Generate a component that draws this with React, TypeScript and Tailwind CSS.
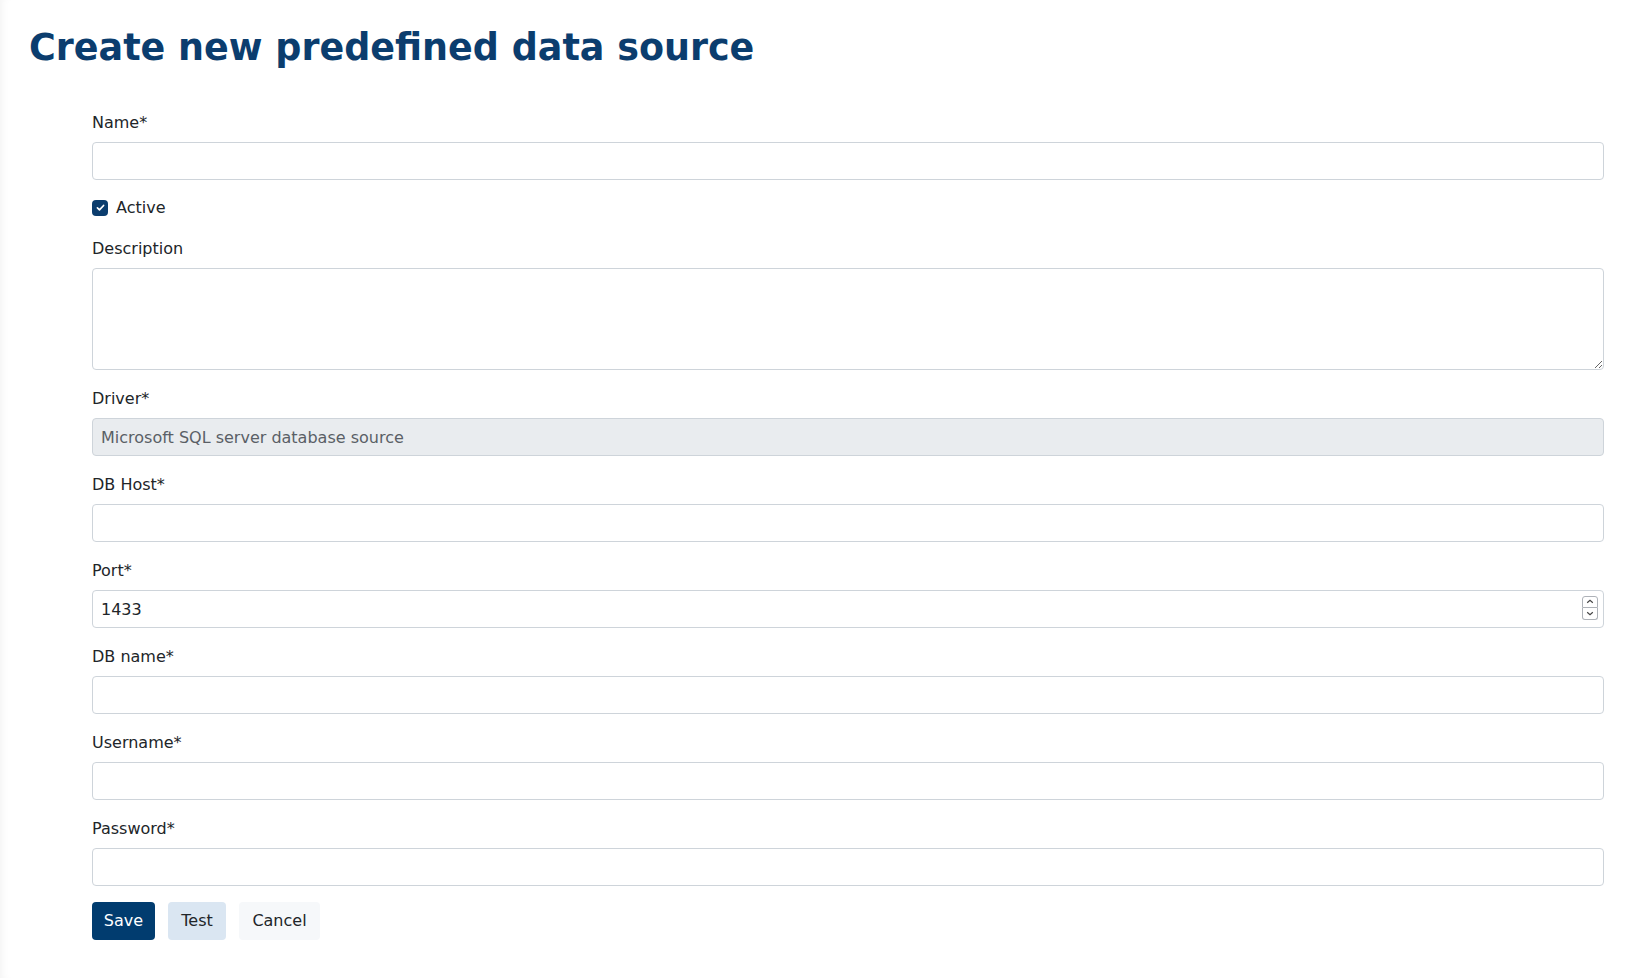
import { useState } from 'react';

const font = { fontFamily: '"DejaVu Sans", "Liberation Sans", sans-serif' };

const inputCls =
  'block w-full h-[38px] px-2 rounded-[4px] border border-[#ced4da] bg-white text-[16px] text-[#212529] outline-none';

function Label({ children }: { children: React.ReactNode }) {
  return <label className="block mb-2 pt-px h-6 leading-6 text-[16px] text-[#212529]">{children}</label>;
}

function TextField({ label, value }: { label: string; value?: string }) {
  return (
    <div className="mb-4">
      <Label>{label}</Label>
      <input type="text" defaultValue={value} className={inputCls} />
    </div>
  );
}

export default function App() {
  const [active, setActive] = useState(true);

  return (
    <div
      style={font}
      className="min-h-screen bg-white shadow-[inset_8px_0_8px_-6px_rgba(0,0,0,0.05)]"
    >
      {/* Header */}
      <h1 className="pl-[29px] pt-[26px] text-[36.5px] leading-[1.2] font-bold text-[#0b3d6e]">
        Create new predefined data source
      </h1>

      {/* Form */}
      <form className="ml-[92px] mr-[43px] mt-[40px]" onSubmit={(e) => e.preventDefault()}>
        <TextField label="Name*" />

        <div className="mb-4 flex items-center h-6">
          <button
            type="button"
            onClick={() => setActive(!active)}
            className={`w-4 h-4 rounded-[4px] flex items-center justify-center ${
              active ? 'bg-[#0b3d6e]' : 'bg-white border border-[#ced4da]'
            }`}
          >
            {active && (
              <svg viewBox="0 0 16 16" className="w-[11px] h-[11px]">
                <path
                  d="M3.5 8.5l3 3 6-6.5"
                  fill="none"
                  stroke="#fff"
                  strokeWidth="2.4"
                  strokeLinecap="round"
                  strokeLinejoin="round"
                />
              </svg>
            )}
          </button>
          <span className="ml-2 pt-px text-[16px] leading-6 text-[#212529]">Active</span>
        </div>

        <div className="mb-4">
          <Label>Description</Label>
          <textarea className="block w-full h-[102px] px-2 py-1.5 rounded-[4px] border border-[#ced4da] bg-white text-[16px] outline-none resize-y" />
        </div>

        <div className="mb-4">
          <Label>Driver*</Label>
          <input
            type="text"
            readOnly
            value="Microsoft SQL server database source"
            className="block w-full h-[38px] px-2 pt-px rounded-[4px] border border-[#ced4da] bg-[#e9ecef] text-[16px] text-[#5a5f66] outline-none"
          />
        </div>

        <TextField label="DB Host*" />

        <div className="mb-4">
          <Label>Port*</Label>
          <div className="relative">
            <input type="text" defaultValue="1433" className={`${inputCls} pt-px text-[#3a3f45]`} />
            {/* spinner */}
            <div className="absolute right-[6px] top-[6px] w-[16px] h-6 flex flex-col">
              <div className="h-3 rounded-t-[3px] border border-[#aeb2b8] flex items-center justify-center">
                <svg viewBox="0 0 10 6" className="w-[8px] h-[5px]">
                  <path d="M1.5 4.5l3.5-3 3.5 3" fill="none" stroke="#444" strokeWidth="1.5" />
                </svg>
              </div>
              <div className="h-3 rounded-b-[3px] border border-t-0 border-[#aeb2b8] flex items-center justify-center">
                <svg viewBox="0 0 10 6" className="w-[8px] h-[5px]">
                  <path d="M1.5 1.5l3.5 3 3.5-3" fill="none" stroke="#444" strokeWidth="1.5" />
                </svg>
              </div>
            </div>
          </div>
        </div>

        <TextField label="DB name*" />
        <TextField label="Username*" />

        <div className="mb-4">
          <Label>Password*</Label>
          <input type="password" className={inputCls} />
        </div>

        {/* Actions */}
        <div className="flex gap-[13px]">
          <button
            type="submit"
            className="h-[38px] w-[63px] pt-px rounded-[4px] bg-[#013c6f] text-white text-[16px]"
          >
            Save
          </button>
          <button
            type="button"
            className="h-[38px] w-[58px] pt-px rounded-[4px] bg-[#dae6f2] text-[#212529] text-[16px]"
          >
            Test
          </button>
          <button
            type="button"
            className="h-[38px] w-[81px] pt-px rounded-[4px] bg-[#f6f8fa] text-[#212529] text-[16px]"
          >
            Cancel
          </button>
        </div>
      </form>
    </div>
  );
}
